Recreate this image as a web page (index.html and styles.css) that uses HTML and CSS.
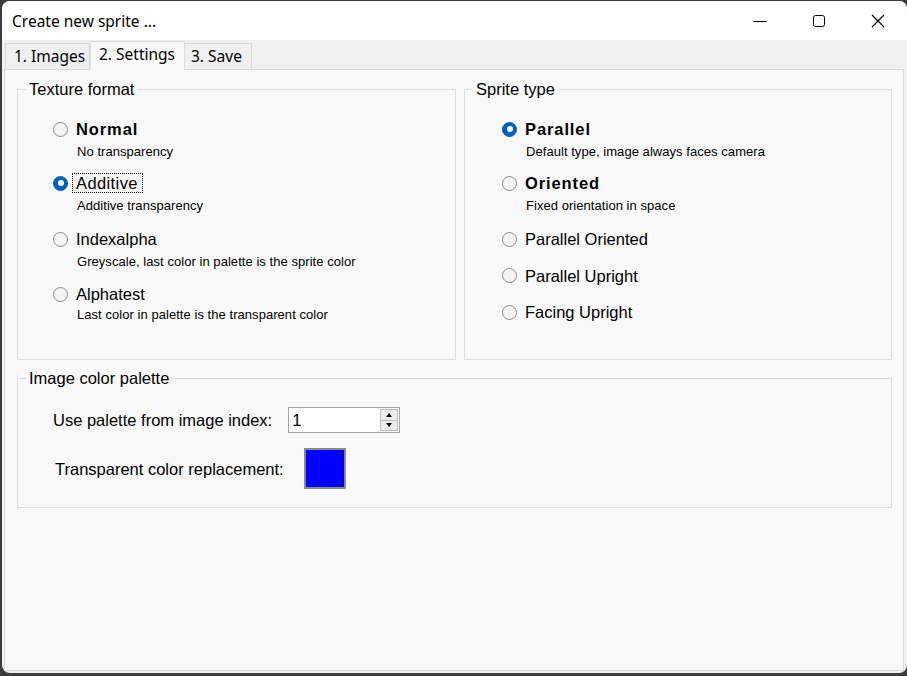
FILE: index.html
```html
<!DOCTYPE html>
<html>
<head>
<meta charset="utf-8">
<title>Create new sprite ...</title>
<link rel="stylesheet" href="styles.css">
</head>
<body>
<div class="window">
  <div class="titlebar">
    <span class="title">Create new sprite ...</span>
    <div class="controls">
      <div class="ctl"><svg width="14" height="14" viewBox="0 0 14 14"><line x1="0.5" y1="7.5" x2="13.5" y2="7.5" stroke="#000" stroke-width="1"/></svg></div>
      <div class="ctl"><svg width="14" height="14" viewBox="0 0 14 14"><rect x="1.5" y="1.5" width="11" height="11" rx="2" fill="none" stroke="#000" stroke-width="1"/></svg></div>
      <div class="ctl"><svg width="14" height="14" viewBox="0 0 14 14"><path d="M1 1 L13 13 M13 1 L1 13" stroke="#000" stroke-width="1.1" fill="none"/></svg></div>
    </div>
  </div>
  <div class="tabs">
    <div class="tab tab1">1. Images</div>
    <div class="tab tab2 active">2. Settings</div>
    <div class="tab tab3">3. Save</div>
  </div>
  <div class="page">
    <div class="row">
      <fieldset class="group texture">
        <legend>Texture format</legend>
        <div class="options">
          <div class="opt"><span class="radio"></span><span class="label bold">Normal</span><span class="desc">No transparency</span></div>
          <div class="opt"><span class="radio checked"><span class="dot"></span></span><span class="label focus">Additive</span><span class="desc">Additive transparency</span></div>
          <div class="opt extra"><span class="radio"></span><span class="label">Indexalpha</span><span class="desc">Greyscale, last color in palette is the sprite color</span></div>
          <div class="opt extra1 tight"><span class="radio"></span><span class="label">Alphatest</span><span class="desc">Last color in palette is the transparent color</span></div>
        </div>
      </fieldset>
      <fieldset class="group sprite">
        <legend>Sprite type</legend>
        <div class="options">
          <div class="opt"><span class="radio checked"><span class="dot"></span></span><span class="label bold">Parallel</span><span class="desc">Default type, image always faces camera</span></div>
          <div class="opt"><span class="radio"></span><span class="label bold">Oriented</span><span class="desc">Fixed orientation in space</span></div>
          <div class="opt plain"><span class="radio"></span><span class="label">Parallel Oriented</span></div>
          <div class="opt plain"><span class="radio"></span><span class="label">Parallel Upright</span></div>
          <div class="opt plain"><span class="radio"></span><span class="label">Facing Upright</span></div>
        </div>
      </fieldset>
    </div>
    <fieldset class="group palette">
      <legend>Image color palette</legend>
      <div class="palette-body">
        <div class="prow prow1">
          <span class="label">Use palette from image index:</span>
          <div class="spin">
            <span class="spin-value">1</span>
            <div class="spin-btns">
              <span class="spin-btn"><span class="arrow-up"></span></span>
              <span class="spin-btn"><span class="arrow-down"></span></span>
            </div>
          </div>
        </div>
        <div class="prow prow2">
          <span class="label">Transparent color replacement:</span>
          <span class="swatch"></span>
        </div>
      </div>
    </fieldset>
  </div>
</div>
</body>
</html>
```
FILE: styles.css
```css
html, body {
  margin: 0;
  padding: 0;
}
body {
  background: #3c3c3c;
  width: 907px;
  height: 676px;
  overflow: hidden;
}
.window {
  margin: 1px 0 0 2px;
  width: 905px;
  height: 672px;
  background: #f0f0f0;
  border-radius: 8px;
  overflow: hidden;
  display: flex;
  flex-direction: column;
  font-family: "Liberation Sans", Arial, sans-serif;
  color: #000;
}
.titlebar {
  height: 39px;
  flex: none;
  background: #fff;
  display: flex;
  align-items: center;
}
.title {
  padding-left: 10px;
  font-family: "Noto Sans", sans-serif;
  font-size: 15.5px;
  line-height: 20px;
}
.controls {
  margin-left: auto;
  display: flex;
  align-self: stretch;
}
.ctl {
  width: 59px;
  display: flex;
  align-items: center;
  justify-content: center;
}
.tabs {
  height: 29px;
  flex: none;
  display: flex;
  align-items: flex-end;
  padding-left: 3px;
  font-family: "Noto Sans", sans-serif;
  font-size: 15.5px;
  line-height: 20px;
}
.tab {
  box-sizing: border-box;
  height: 26px;
  border: 1px solid #d9d9d9;
  border-bottom: none;
  background: #f0f0f0;
  padding: 2px 0 0 8px;
}
.tab1 { width: 85px; }
.tab2 { width: 95px; }
.tab3 { width: 67px; border-left: none; padding-left: 6px; }
.tab.active {
  height: 29px;
  margin-bottom: -1px;
  background: #f9f9f9;
  border-color: #dcdcdc;
  position: relative;
  z-index: 1;
  padding-left: 8px;
}
.page {
  flex: 1;
  margin: 0 3px 2px 2px;
  background: #f9f9f9;
  border: 1px solid #dadada;
  padding: 10px 11px 0 12px;
}
.row {
  display: flex;
  gap: 8px;
}
.group {
  margin: 0;
  padding: 0;
  min-width: 0;
  border: 1px solid #dcdcdc;
  box-sizing: border-box;
}
.group legend {
  margin-left: 8px;
  padding: 0 3px;
  font-size: 16.5px;
  line-height: 18px;
}
.texture {
  width: 439px;
  height: 280px;
}
.sprite {
  flex: 1;
  height: 280px;
}
.options {
  padding: 22px 0 0 35px;
  display: flex;
  flex-direction: column;
  gap: 14px;
}
.sprite .options {
  padding-left: 37px;
}
.opt {
  display: grid;
  grid-template-columns: 15px auto;
  column-gap: 8px;
  row-gap: 6px;
  align-items: center;
  justify-items: start;
}
.opt.extra { margin-top: 2px; }
.opt.extra1 { margin-top: 1px; }
.opt.tight { row-gap: 4px; }
.opt.plain { margin-top: 2px; }
.opt.plain + .opt.plain { margin-top: 4.5px; }
.radio {
  width: 15px;
  height: 15px;
  box-sizing: border-box;
  border-radius: 50%;
  border: 1px solid #8b8b8b;
  background: #f4f4f4;
}
.radio.checked {
  background: #005fb8;
  border-color: #005fb8;
  display: flex;
  align-items: center;
  justify-content: center;
}
.dot {
  width: 6px;
  height: 6px;
  border-radius: 50%;
  background: #fff;
}
.label {
  font-size: 16.5px;
  line-height: 18px;
  white-space: nowrap;
}
.bold {
  font-weight: bold;
  letter-spacing: 0.9px;
}
.focus {
  outline: 1px dotted #000;
  outline-offset: 0;
  padding: 0 4px 0 3px;
  margin-left: -3px;
  letter-spacing: 0.4px;
}
.desc {
  grid-column: 2;
  font-size: 13px;
  line-height: 16px;
  padding-left: 1px;
  white-space: nowrap;
  letter-spacing: 0.05px;
}
.palette {
  margin-top: 9px;
  height: 139px;
}
.palette-body {
  padding: 20px 0 0 35px;
  display: flex;
  flex-direction: column;
  gap: 15px;
}
.prow {
  display: flex;
  align-items: center;
}
.prow1 { gap: 16px; }
.prow2 { gap: 20px; padding-left: 2px; }
.spin {
  width: 112px;
  height: 26px;
  box-sizing: border-box;
  border: 1px solid #a6a6a6;
  background: #fff;
  display: flex;
}
.spin-value {
  flex: 1;
  padding-left: 3px;
  font-size: 16.5px;
  line-height: 24px;
}
.spin-btns {
  width: 18px;
  margin: 1px 1px 1px 0;
  display: flex;
  flex-direction: column;
}
.spin-btn {
  flex: 1;
  border: 1px solid #bdbdbd;
  background: #ececec;
  display: flex;
  align-items: center;
  justify-content: center;
}
.spin-btn + .spin-btn { border-top: none; }
.arrow-up {
  width: 0;
  height: 0;
  border-left: 3.5px solid transparent;
  border-right: 3.5px solid transparent;
  border-bottom: 4px solid #000;
}
.arrow-down {
  width: 0;
  height: 0;
  border-left: 3.5px solid transparent;
  border-right: 3.5px solid transparent;
  border-top: 4px solid #000;
}
.swatch {
  width: 42px;
  height: 41px;
  box-sizing: border-box;
  border: 2px solid #8a8a8a;
  background: #0000ff;
}
```
